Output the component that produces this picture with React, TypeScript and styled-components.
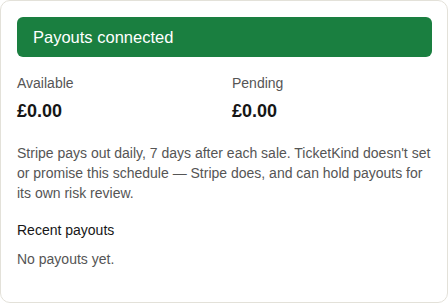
import React from "react";
import styled, { createGlobalStyle } from "styled-components";

const Global = createGlobalStyle`
  html, body { margin: 0; padding: 0; background: #ffffff; }
  body { font-family: "Liberation Sans", Arial, sans-serif; }
`;

const Card = styled.section`
  box-sizing: border-box;
  width: 448px;
  height: 303px;
  border: 1px solid #e3e1d9;
  border-radius: 10px;
  background: #ffffff;
  padding: 16px;
  display: flex;
  flex-direction: column;
`;

const Banner = styled.div`
  background: #1a7f40;
  color: #ffffff;
  border-radius: 6px;
  height: 40px;
  display: flex;
  align-items: center;
  padding: 0 16px;
  font-size: 16.5px;
  margin-right: -1px;
`;

const Stats = styled.div`
  display: grid;
  grid-template-columns: 1fr 1fr;
  column-gap: 16px;
  margin-top: 17px;
`;

const Stat = styled.div`
  display: flex;
  flex-direction: column;
`;

const Label = styled.div`
  font-size: 14px;
  line-height: 18px;
  color: #555555;
`;

const Amount = styled.div`
  font-size: 18px;
  line-height: 22px;
  font-weight: 700;
  color: #161616;
  margin-top: 8px;
`;

const Note = styled.p`
  margin: 21px 0 0 0;
  font-size: 14px;
  line-height: 20px;
  color: #555555;
`;

const Heading = styled.h3`
  margin: 18px 0 0 0;
  font-size: 14px;
  line-height: 18px;
  font-weight: 500;
  color: #161616;
`;

const Empty = styled.p`
  margin: 11px 0 0 0;
  font-size: 14px;
  line-height: 18px;
  color: #555555;
`;

export default function App() {
  return (
    <>
      <Global />
      <Card>
        <Banner>Payouts connected</Banner>
        <Stats>
          <Stat>
            <Label>Available</Label>
            <Amount>£0.00</Amount>
          </Stat>
          <Stat>
            <Label>Pending</Label>
            <Amount>£0.00</Amount>
          </Stat>
        </Stats>
        <Note>
          Stripe pays out daily, 7 days after each sale. TicketKind doesn't set
          or promise this schedule — Stripe does, and can hold payouts for its
          own risk review.
        </Note>
        <Heading>Recent payouts</Heading>
        <Empty>No payouts yet.</Empty>
      </Card>
    </>
  );
}
